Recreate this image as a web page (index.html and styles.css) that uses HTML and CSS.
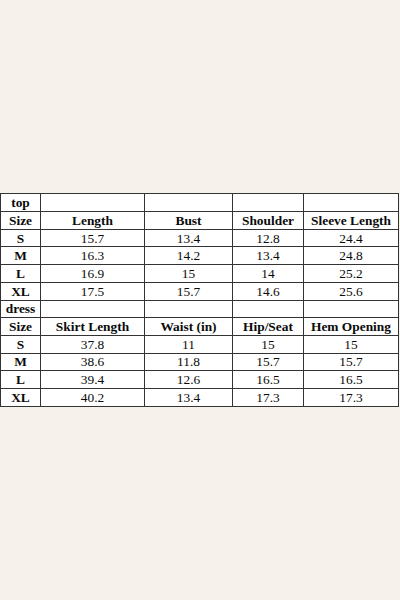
FILE: index.html
```html
<!DOCTYPE html>
<html>
<head>
<meta charset="utf-8">
<link rel="stylesheet" href="styles.css">
</head>
<body>
<div class="page">
<table class="chart">
<colgroup>
<col class="c1"><col class="c2"><col class="c3"><col class="c4"><col class="c5">
</colgroup>
<tbody>
<tr><th>top</th><td></td><td></td><td></td><td></td></tr>
<tr><th>Size</th><th>Length</th><th>Bust</th><th>Shoulder</th><th>Sleeve Length</th></tr>
<tr><th>S</th><td>15.7</td><td>13.4</td><td>12.8</td><td>24.4</td></tr>
<tr><th>M</th><td>16.3</td><td>14.2</td><td>13.4</td><td>24.8</td></tr>
<tr><th>L</th><td>16.9</td><td>15</td><td>14</td><td>25.2</td></tr>
<tr><th>XL</th><td>17.5</td><td>15.7</td><td>14.6</td><td>25.6</td></tr>
<tr><th>dress</th><td></td><td></td><td></td><td></td></tr>
<tr><th>Size</th><th>Skirt Length</th><th>Waist (in)</th><th>Hip/Seat</th><th>Hem Opening</th></tr>
<tr><th>S</th><td>37.8</td><td>11</td><td>15</td><td>15</td></tr>
<tr><th>M</th><td>38.6</td><td>11.8</td><td>15.7</td><td>15.7</td></tr>
<tr><th>L</th><td>39.4</td><td>12.6</td><td>16.5</td><td>16.5</td></tr>
<tr><th>XL</th><td>40.2</td><td>13.4</td><td>17.3</td><td>17.3</td></tr>
</tbody>
</table>
</div>
</body>
</html>
```
FILE: styles.css
```css
html, body {
  margin: 0;
  padding: 0;
  background: #f6f2eb;
}
.page {
  width: 400px;
  height: 600px;
  display: flex;
  align-items: center;
  justify-content: flex-start;
  box-sizing: border-box;
}
.chart {
  border-collapse: collapse;
  table-layout: fixed;
  width: 398px;
  background: #fff;
  font-family: "Liberation Serif", "Times New Roman", serif;
  font-size: 13.4px;
  color: #0a0a0a;
}
.c1 { width: 40px; }
.c2 { width: 104px; }
.c3 { width: 88px; }
.c4 { width: 71px; }
.c5 { width: 95px; }
.chart th, .chart td {
  border: 1px solid #333;
  height: 16.7px;
  padding: 0;
  text-align: center;
  vertical-align: middle;
  line-height: 15px;
  white-space: nowrap;
}
.chart th { font-weight: bold; }
.chart td { font-weight: normal; }
```
